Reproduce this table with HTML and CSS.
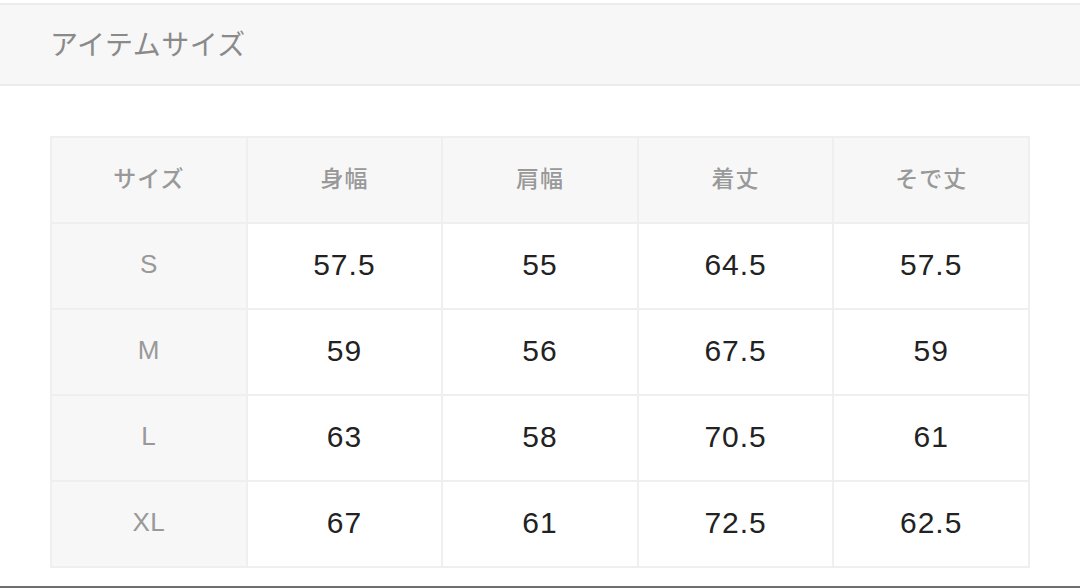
FILE: index.html
```html
<!DOCTYPE html>
<html lang="ja">
<head>
<meta charset="utf-8">
<link rel="stylesheet" href="styles.css">
</head>
<body>
<div class="page">
  <div class="titlebar"><h2 class="title">アイテムサイズ</h2></div>
  <div class="content">
    <div class="grid">
      <div class="cell head">サイズ</div>
      <div class="cell head">身幅</div>
      <div class="cell head">肩幅</div>
      <div class="cell head">着丈</div>
      <div class="cell head">そで丈</div>

      <div class="cell label">S</div>
      <div class="cell val">57.5</div>
      <div class="cell val">55</div>
      <div class="cell val">64.5</div>
      <div class="cell val">57.5</div>

      <div class="cell label">M</div>
      <div class="cell val">59</div>
      <div class="cell val">56</div>
      <div class="cell val">67.5</div>
      <div class="cell val">59</div>

      <div class="cell label">L</div>
      <div class="cell val">63</div>
      <div class="cell val">58</div>
      <div class="cell val">70.5</div>
      <div class="cell val">61</div>

      <div class="cell label">XL</div>
      <div class="cell val">67</div>
      <div class="cell val">61</div>
      <div class="cell val">72.5</div>
      <div class="cell val">62.5</div>
    </div>
  </div>
  <div class="bottomline"></div>
</div>
</body>
</html>
```

FILE: styles.css
```css
* { box-sizing: border-box; }
html, body { margin: 0; padding: 0; background: #ffffff; }
body {
  width: 1080px;
  height: 588px;
  overflow: hidden;
  font-family: "Liberation Sans", "Noto Sans CJK JP", sans-serif;
}
.page {
  display: flex;
  flex-direction: column;
  height: 588px;
}
.titlebar {
  margin-top: 3px;
  height: 83px;
  background: #f7f7f7;
  border-top: 2px solid #ececec;
  border-bottom: 2px solid #ececec;
  display: flex;
  align-items: center;
  padding-left: 50px;
  padding-bottom: 4px;
}
.title {
  margin: 0;
  font-family: "Noto Sans CJK JP", sans-serif;
  font-weight: 400;
  font-size: 28px;
  letter-spacing: 0.5px;
  color: #8a8a8a;
}
.content {
  flex: 1;
  padding: 50px 50px 0 50px;
}
.grid {
  display: grid;
  grid-template-columns: repeat(5, 1fr);
  grid-auto-rows: 84px;
  gap: 2px;
  padding: 2px;
  background: #efefef;
  width: 980px;
}
.cell {
  display: flex;
  align-items: center;
  justify-content: center;
  background: #ffffff;
  padding-bottom: 3px;
}
.head {
  background: #f7f7f7;
  font-family: "Noto Sans CJK JP", sans-serif;
  font-weight: 500;
  font-size: 23px;
  letter-spacing: 1px;
  color: #999999;
  padding-bottom: 6px;
}
.label {
  background: #f7f7f7;
  font-size: 26px;
  letter-spacing: 0.5px;
  color: #999999;
}
.val {
  font-size: 30px;
  letter-spacing: 1px;
  color: #222222;
}
.bottomline {
  height: 2px;
  background: #6e6e6e;
}
```
